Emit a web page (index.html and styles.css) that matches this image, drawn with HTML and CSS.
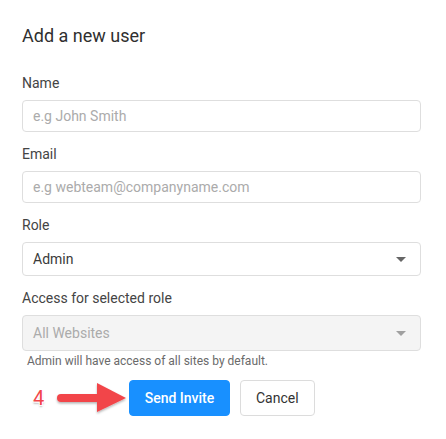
FILE: index.html
```html
<!DOCTYPE html>
<html>
<head>
<meta charset="utf-8">
<link rel="stylesheet" href="styles.css">
</head>
<body>
<div class="dialog">
  <h1 class="title">Add a new user</h1>
  <div class="field">
    <label class="label">Name</label>
    <div class="input h32"><span class="ph">e.g John Smith</span></div>
  </div>
  <div class="field">
    <label class="label">Email</label>
    <div class="input h32"><span class="ph">e.g webteam@companyname.com</span></div>
  </div>
  <div class="field">
    <label class="label">Role</label>
    <div class="input select h34"><span class="val">Admin</span><span class="caret"></span></div>
  </div>
  <div class="field last">
    <label class="label">Access for selected role</label>
    <div class="input select disabled h36"><span class="ph">All Websites</span><span class="caret light"></span></div>
    <div class="help">Admin will have access of all sites by default.</div>
  </div>
  <div class="actions">
    <span class="step">4</span>
    <svg class="arrow" width="74" height="34" viewBox="0 0 74 34">
      <defs>
        <filter id="sh" x="-10%" y="-20%" width="120%" height="160%">
          <feDropShadow dx="0" dy="1.5" stdDeviation="1" flood-color="#000" flood-opacity="0.3"/>
        </filter>
      </defs>
      <g filter="url(#sh)" fill="#f2454a">
        <rect x="2" y="13" width="44" height="8" rx="4"/>
        <polygon points="42,2 71,17 42,31"/>
      </g>
    </svg>
    <button class="btn primary">Send Invite</button>
    <button class="btn">Cancel</button>
  </div>
</div>
</body>
</html>
```

FILE: styles.css
```css
* { box-sizing: border-box; }
body {
  margin: 0;
  background: #fff;
  font-family: Roboto, "Liberation Sans", Arial, sans-serif;
  color: #333;
}
.dialog {
  width: 399px;
  margin-left: 22px;
  padding-top: 24px;
}
.title {
  margin: 0 0 26px;
  font-size: 18px;
  line-height: 24px;
  font-weight: 400;
  color: #2f2f2f;
}
.field { margin-bottom: 13px; }
.field.last { margin-bottom: 0; }
.label {
  display: block;
  font-size: 14px;
  line-height: 18px;
  font-weight: 400;
  margin-bottom: 8px;
  color: #444;
}
.input {
  display: flex;
  align-items: center;
  border: 1px solid #dedede;
  border-radius: 4px;
  padding: 0 10px;
  font-size: 14px;
  background: #fff;
}
.h32 { height: 32px; }
.h34 { height: 34px; }
.h36 { height: 36px; }
.ph { color: #ababab; }
.val { color: #3a3a3a; }
.select { justify-content: space-between; padding-right: 14px; }
.disabled { background: #f4f4f4; }
.caret {
  width: 0; height: 0;
  border-left: 5px solid transparent;
  border-right: 5px solid transparent;
  border-top: 5px solid #666;
}
.caret.light { border-top-color: #a0a0a0; }
.help {
  font-size: 12px;
  line-height: 15px;
  color: #6a6a6a;
  margin-top: 3px;
  padding-left: 5px;
}
.actions {
  display: flex;
  align-items: center;
  margin-top: 11px;
  padding-left: 11px;
}
.step {
  width: 14px;
  font-size: 20px;
  line-height: 22px;
  color: #f2454a;
  font-weight: 400;
  text-shadow: -1px -1px 0 #fff, 1px -1px 0 #fff, -1px 1px 0 #fff, 1px 1px 0 #fff, 0 2px 2px rgba(0,0,0,0.35);
}
.arrow { margin-left: 8px; display: block; }
.btn {
  height: 36px;
  border-radius: 4px;
  border: 1px solid #dcdcdc;
  background: #fff;
  font-family: Roboto, "Liberation Sans", Arial, sans-serif;
  font-size: 14px;
  color: #333;
  padding: 0 15px;
  margin-right: 10px;
}
.btn.primary {
  width: 101px;
  padding: 0;
  background: #1890ff;
  border-color: #1890ff;
  color: #fff;
  font-weight: 500;
}
```
